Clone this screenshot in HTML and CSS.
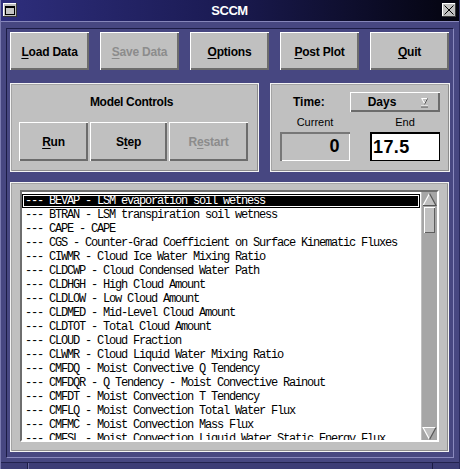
FILE: index.html
```html
<!DOCTYPE html>
<html>
<head>
<meta charset="utf-8">
<title>SCCM</title>
<link rel="stylesheet" href="styles.css">
</head>
<body>
<div class="window">
  <div class="titlebar">
    <span class="tb-btn menu-btn">
      <svg width="14" height="14" viewBox="0 0 14 14">
        <rect width="14" height="14" fill="#c0c0c0"/>
        <path d="M0 0H14V1H1V14H0Z" fill="#ffffff"/>
        <path d="M14 14H0V13H13V0H14Z" fill="#3a3a3a"/>
        <rect x="2.5" y="3.5" width="9" height="8" fill="#c4c4c4" stroke="#000"/>
        <rect x="3" y="4" width="8" height="1" fill="#000"/>
      </svg>
    </span>
    <span class="title">SCCM</span>
    <span class="tb-btn close-btn">
      <svg width="14" height="14" viewBox="0 0 14 14">
        <rect width="14" height="14" fill="#c0c0c0"/>
        <path d="M0 0H14V1H1V14H0Z" fill="#ffffff"/>
        <path d="M14 14H0V13H13V0H14Z" fill="#3a3a3a"/>
        <path d="M2.5 2.5L11.5 11.5M11.5 2.5L2.5 11.5" stroke="#000" stroke-width="1"/>
      </svg>
    </span>
  </div>

  <div class="client">
    <div class="toolbar">
      <button class="btn"><u>L</u>oad Data</button>
      <button class="btn disabled"><u>S</u>ave Data</button>
      <button class="btn"><u>O</u>ptions</button>
      <button class="btn"><u>P</u>ost Plot</button>
      <button class="btn"><u>Q</u>uit</button>
    </div>

    <div class="panels">
      <div class="panel model">
        <div class="panel-title">Model Controls</div>
        <div class="model-btns">
          <button class="btn"><u>R</u>un</button>
          <button class="btn">S<u>t</u>ep</button>
          <button class="btn disabled">R<u>e</u>start</button>
        </div>
      </div>

      <div class="panel time">
        <div class="time-row">
          <span class="time-label">Time:</span>
          <div class="option-menu">
            <span class="option-text">Days</span>
            <svg class="option-ind" width="7" height="10" viewBox="0 0 7 10">
              <polygon points="0,0 7,0 3.5,6.5" fill="#ffffff"/>
              <polygon points="1.6,1 5.4,1 3.5,4.6" fill="#c0c0c0"/>
              <path d="M6.6 0.4L3.5 6.4" stroke="#505050" stroke-width="1"/>
              <rect x="0" y="7.5" width="7" height="1" fill="#ffffff"/>
              <rect x="0" y="8.5" width="7" height="1" fill="#505050"/>
            </svg>
          </div>
        </div>
        <div class="fields">
          <div class="field-col">
            <span class="field-label">Current</span>
            <div class="field current">0</div>
          </div>
          <div class="field-col">
            <span class="field-label">End</span>
            <div class="field end">17.5</div>
          </div>
        </div>
      </div>
    </div>

    <div class="panel list-panel">
      <div class="scrolled">
        <ul class="list">
          <li class="selected">--- BEVAP - LSM evaporation soil wetness</li>
          <li>--- BTRAN - LSM transpiration soil wetness</li>
          <li>--- CAPE - CAPE</li>
          <li>--- CGS - Counter-Grad Coefficient on Surface Kinematic Fluxes</li>
          <li>--- CIWMR - Cloud Ice Water Mixing Ratio</li>
          <li>--- CLDCWP - Cloud Condensed Water Path</li>
          <li>--- CLDHGH - High Cloud Amount</li>
          <li>--- CLDLOW - Low Cloud Amount</li>
          <li>--- CLDMED - Mid-Level Cloud Amount</li>
          <li>--- CLDTOT - Total Cloud Amount</li>
          <li>--- CLOUD - Cloud Fraction</li>
          <li>--- CLWMR - Cloud Liquid Water Mixing Ratio</li>
          <li>--- CMFDQ - Moist Convective Q Tendency</li>
          <li>--- CMFDQR - Q Tendency - Moist Convective Rainout</li>
          <li>--- CMFDT - Moist Convection T Tendency</li>
          <li>--- CMFLQ - Moist Convection Total Water Flux</li>
          <li>--- CMFMC - Moist Convection Mass Flux</li>
          <li>--- CMFSL - Moist Convection Liquid Water Static Energy Flux</li>
        </ul>
        <div class="scrollbar">
          <svg class="arrow" width="15" height="13" viewBox="0 0 15 13">
            <polygon points="7.5,0.5 14,12.5 1,12.5" fill="#c0c0c0"/>
            <path d="M1 12.5L7.5 0.5" stroke="#ffffff" stroke-width="1.2"/>
            <path d="M7.5 0.5L14 12.5H1" stroke="#555555" stroke-width="1.2" fill="none"/>
          </svg>
          <div class="thumb"></div>
          <div class="track-space"></div>
          <svg class="arrow" width="15" height="13" viewBox="0 0 15 13">
            <polygon points="1,0.5 14,0.5 7.5,12.5" fill="#c0c0c0"/>
            <path d="M7.5 12.5L1 0.5H14" stroke="#ffffff" stroke-width="1.2" fill="none"/>
            <path d="M14 0.5L7.5 12.5" stroke="#555555" stroke-width="1.2"/>
          </svg>
        </div>
      </div>
    </div>
  </div>

  <div class="bottom-frame">
    <div class="handles">
      <span class="seg seg-corner"></span>
      <span class="seg seg-mid"></span>
      <span class="seg seg-corner"></span>
    </div>
  </div>
</div>
</body>
</html>
```

FILE: styles.css
```css
* {
  box-sizing: border-box;
}

html, body {
  margin: 0;
  padding: 0;
}

body {
  width: 460px;
  height: 469px;
  overflow: hidden;
  background: #474781;
  font-family: "Liberation Sans", Arial, sans-serif;
}

.window {
  width: 460px;
  height: 469px;
  display: flex;
  flex-direction: column;
  background: #474781;
  border-left: 1px solid #7a7ab0;
  border-right: 1px solid #2a2a5e;
}

/* ---------- title bar ---------- */
.titlebar {
  height: 22px;
  flex: none;
  display: flex;
  align-items: flex-start;
  padding-top: 3px;
  background: linear-gradient(to right, #2e2e7c 0%, #1c1c56 45%, #04040f 100%);
  border-bottom: 1px solid #8686ba;
}

.tb-btn {
  width: 14px;
  height: 14px;
  flex: none;
  display: block;
}

.tb-btn svg {
  display: block;
}

.menu-btn {
  margin-left: 2px;
}

.close-btn {
  margin-right: 3px;
}

.title {
  flex: 1;
  text-align: center;
  color: #ffffff;
  font-weight: bold;
  font-size: 13px;
  letter-spacing: -0.5px;
  line-height: 15px;
}

/* ---------- client area ---------- */
.client {
  flex: none;
  height: 430px;
  margin: 6px 5px 0 5px;
  border-top: 1px solid #1c1c46;
  border-left: 1px solid #1c1c46;
  border-bottom: 1px solid #8a8abe;
  border-right: 1px solid #8a8abe;
  padding: 3px 4px 5px 3px;
  display: flex;
  flex-direction: column;
}

/* ---------- buttons ---------- */
.btn {
  background: #c0c0c0;
  border: none;
  padding: 0;
  margin: 0;
  color: #000000;
  font-family: "Liberation Sans", Arial, sans-serif;
  font-weight: bold;
  font-size: 12px;
  letter-spacing: -0.2px;
  box-shadow: inset 1px 1px 0 #ffffff, inset -2px -2px 0 #6c6c6c;
}

.btn u {
  text-decoration-thickness: 1px;
  text-underline-offset: 2px;
}

.btn.disabled {
  color: #8c8c8c;
}

.toolbar {
  height: 38px;
  flex: none;
  display: flex;
  gap: 11px;
}

.toolbar .btn {
  width: 79px;
  height: 38px;
  padding-top: 2px;
}

/* ---------- panels ---------- */
.panel {
  background: #c0c0c0;
  border: 1px solid #f4f4f4;
  box-shadow: inset 1px 1px 0 #a4a4a4, inset -1px -1px 0 #8c8c8c;
}

.panels {
  margin-top: 13px;
  height: 89px;
  flex: none;
  display: grid;
  grid-template-columns: 249px 180px;
  column-gap: 11px;
}

.model {
  padding: 11px 0 0 8px;
}

.panel-title {
  font-weight: bold;
  font-size: 12px;
  letter-spacing: -0.3px;
  line-height: 14px;
  height: 14px;
  text-align: center;
  padding-right: 14px;
}

.model-btns {
  margin-top: 13px;
  display: grid;
  grid-template-columns: 69px 77px 79px;
  column-gap: 2px;
  height: 39px;
}

.model-btns .btn {
  height: 39px;
  padding-top: 1px;
}

/* time panel */
.time {
  padding: 8px 9px 0 8px;
}

.time-row {
  height: 20px;
  display: flex;
  align-items: center;
  justify-content: space-between;
}

.time-label {
  margin-left: 14px;
  font-weight: bold;
  font-size: 12px;
  line-height: 14px;
}

.option-menu {
  width: 90px;
  height: 20px;
  background: #c0c0c0;
  box-shadow: inset 1px 1px 0 #ffffff, inset -2px -2px 0 #6c6c6c;
  display: flex;
  align-items: center;
  padding: 0 12px 0 17px;
  justify-content: space-between;
}

.option-text {
  font-weight: bold;
  font-size: 12px;
  line-height: 14px;
  width: 30px;
  text-align: center;
}

.option-ind {
  display: block;
  margin-top: 1px;
}

.fields {
  margin-top: 3px;
  display: grid;
  grid-template-columns: 70px 70px;
  column-gap: 20px;
  padding-left: 1px;
}

.field-col {
  display: flex;
  flex-direction: column;
  align-items: center;
}

.field-label {
  font-size: 11px;
  line-height: 14px;
  height: 14px;
  color: #000;
}

.field {
  margin-top: 3px;
  width: 70px;
  height: 29px;
  font-weight: bold;
  font-size: 18px;
  line-height: 29px;
  letter-spacing: 0.4px;
}

.field.current {
  background: #c0c0c0;
  text-align: right;
  padding-right: 10px;
  box-shadow: inset 2px 2px 0 #777777, inset -1px -1px 0 #ffffff;
}

.field.end {
  background: #ffffff;
  text-align: left;
  padding-left: 1px;
  border-top: 2px solid #000;
  border-left: 2px solid #000;
  border-right: 1px solid #000;
  border-bottom: 1px solid #000;
  line-height: 26px;
}

/* ---------- list panel ---------- */
.list-panel {
  margin-top: 10px;
  height: 270px;
  flex: none;
  padding: 7px 9px 9px 9px;
}

.scrolled {
  height: 252px;
  display: flex;
  gap: 1px;
  background: #c0c0c0;
  border-top: 2px solid #6e6e6e;
  border-left: 2px solid #6e6e6e;
  border-bottom: 2px solid #ffffff;
  border-right: 2px solid #ffffff;
}

.list {
  list-style: none;
  margin: 0;
  padding: 2px 0 0 0;
  width: 400px;
  height: 248px;
  overflow: hidden;
  background: #ffffff;
  font-family: "Liberation Mono", "DejaVu Sans Mono", monospace;
  font-size: 12px;
  letter-spacing: -1.2px;
  color: #000000;
}

.list li {
  height: 14px;
  line-height: 14px;
  padding-left: 3px;
  white-space: nowrap;
}

.list li.selected {
  background: #000000;
  color: #ffffff;
  margin-right: 1px;
  box-shadow: inset 0 0 0 1px #000000, inset 0 0 0 2px #ffffff;
}

.scrollbar {
  width: 15px;
  height: 248px;
  background: #a6a6a6;
  display: flex;
  flex-direction: column;
  padding: 1px 0 0 0;
}

.arrow {
  display: block;
  flex: none;
}

.thumb {
  flex: none;
  height: 26px;
  margin: 1px 2px 0 2px;
  background: #c0c0c0;
  box-shadow: inset 1px 1px 0 #ffffff, inset -1px -1px 0 #5e5e5e;
}

.track-space {
  flex: 1;
}

/* ---------- bottom frame ---------- */
.bottom-frame {
  flex: 1;
  padding-top: 4px;
}

.handles {
  height: 7px;
  display: flex;
  border-top: 1px solid #23234f;
}

.seg {
  display: block;
  height: 100%;
  background: #3d3d76;
}

.seg-corner {
  width: 26px;
}

.seg-mid {
  flex: 1;
  border-left: 1px solid #1c1c44;
  border-right: 1px solid #1c1c44;
  box-shadow: inset 1px 0 0 #6a6aa2;
}
```
